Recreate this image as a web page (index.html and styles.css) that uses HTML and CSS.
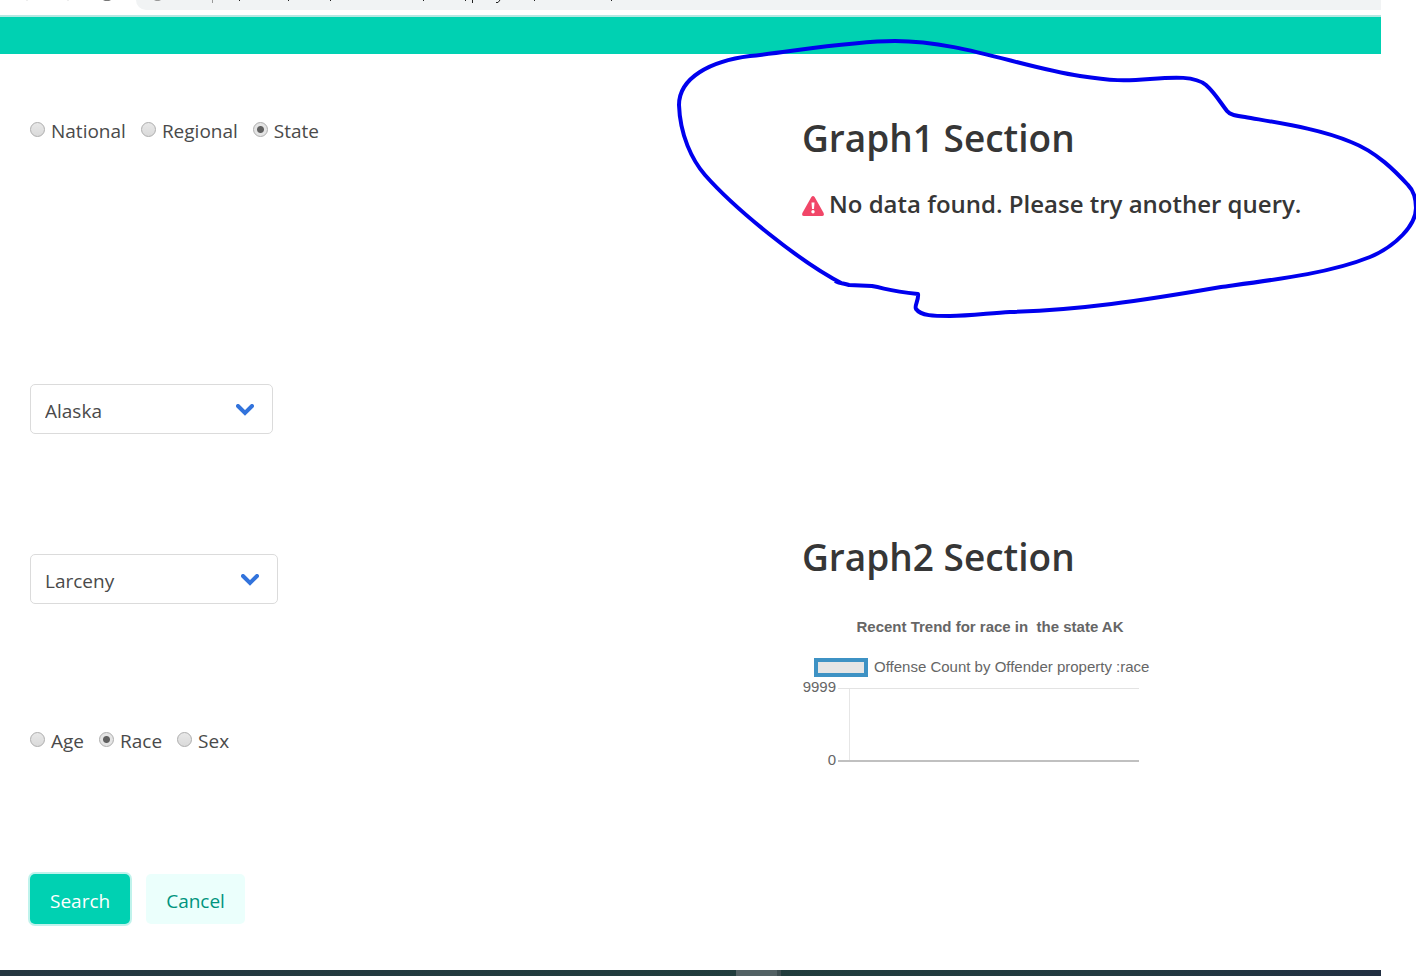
FILE: index.html
```html
<!DOCTYPE html>
<html lang="en">
<head>
<meta charset="utf-8">
<title>Crime data query</title>
<link rel="stylesheet" href="styles.css">
</head>
<body>
<div class="screen">
  <div class="browser-bar">
    <svg class="bar-icons" width="136" height="10" aria-hidden="true">
      <path d="M103 0h8l-2 1h-4z" fill="#777"/>
      <path d="M26 0h2M67 0h2" stroke="#ddd"/>
    </svg>
    <div class="address">
      <svg width="500" height="10" aria-hidden="true">
        <path d="M18 0h7l-2 1h-3z" fill="#999"/>
        <path d="M76.500 0v3" stroke="#999"/>
        <path d="M103.500 0v1M152.500 0v1M194.500 0v1M287.500 0v1M329.500 0v1M398.500 0v1M475.500 0v1" stroke="#222"/>
        <path d="M336.500 0v3M364 0l-2 2.500h-2" fill="none" stroke="#222"/>
      </svg>
    </div>
  </div>
  <header class="hero"></header>
  <main class="columns">
    <form class="query">
      <fieldset class="radios scope">
        <label class="radio"><input type="radio" name="scope">National</label>
        <label class="radio"><input type="radio" name="scope">Regional</label>
        <label class="radio"><input type="radio" name="scope" checked>State</label>
      </fieldset>
      <div class="select state">
        <select aria-label="State"><option>Alaska</option></select>
        <svg class="chevron" viewBox="0 0 18 12" aria-hidden="true"><path d="M2 2l7 7 7-7"/></svg>
      </div>
      <div class="select offense">
        <select aria-label="Offense"><option>Larceny</option></select>
        <svg class="chevron" viewBox="0 0 18 12" aria-hidden="true"><path d="M2 2l7 7 7-7"/></svg>
      </div>
      <fieldset class="radios property">
        <label class="radio"><input type="radio" name="property">Age</label>
        <label class="radio"><input type="radio" name="property" checked>Race</label>
        <label class="radio"><input type="radio" name="property">Sex</label>
      </fieldset>
      <div class="buttons">
        <button type="button" class="button primary">Search</button>
        <button type="button" class="button light">Cancel</button>
      </div>
    </form>
    <div class="graphs">
      <section class="graph">
        <h1>Graph1 Section</h1>
        <h2 class="notice">
          <svg width="22" height="20" viewBox="0 0 22 20" aria-hidden="true">
            <path d="M9.400 1Q11-1 12.600 1L21.600 17Q22.500 20 20 20H2Q-.5 20 .4 17z" fill="#f14668"/>
            <path d="M9.500 6.500h3l-.5 6.500h-2z" fill="#fff"/><circle cx="11" cy="15.800" r="1.700" fill="#fff"/>
          </svg>
          No data found. Please try another query.
        </h2>
      </section>
      <section>
        <h1>Graph2 Section</h1>
        <div class="chart">
          <div class="chart-title">Recent Trend for race in &nbsp;the state AK</div>
          <div class="legend"><span class="swatch"></span>Offense Count by Offender property :race</div>
          <div class="plot">
            <div class="ticks"><span>9999</span><span>0</span></div>
            <div class="area"></div>
          </div>
        </div>
      </section>
    </div>
  </main>
  <footer class="taskbar"><span class="task"></span></footer>
</div>
<svg class="annotation" width="1416" height="330" viewBox="0 0 1416 330" aria-hidden="true">
  <path d="M835 281C841 284 843 283 849 285L872 286C888 289 889 291 918 294C919 300 914 306 916 309C921 316 934 316 950 316C970 316 990 313 1010 312C1080 310 1140 301 1221 287C1280 279 1330 273 1370 257C1396 246 1416 225 1416 208C1416 198 1414 191 1408 185C1396 172 1377 152 1351 142C1320 129 1285 124 1245 117C1236 116 1230 115 1227 111C1220 102 1215 93 1206 85C1195 76 1175 77 1150 79C1125 81 1112 81 1080 76C1020 67 960 41 895 41C850 41 790 52 750 56C710 61 679 78 679 105C680 135 692 160 705 175C735 209 800 262 843 284"/>
</svg>
</body>
</html>
```
FILE: styles.css
```css
* { box-sizing: border-box; }
body {
  margin: 0;
  background: #fff;
  color: #4a4a4a;
  font: 19px/30px "Open Sans", "Noto Sans", sans-serif;
  position: relative;
  overflow-x: hidden;
}
.screen { margin-right: 35px; min-height: 100vh; display: flex; flex-direction: column; }
.browser-bar { display: flex; height: 15px; align-items: flex-start; }
.bar-icons { flex: none; }
.address { flex: 1; height: 10px; background: #f1f3f4; border-bottom-left-radius: 10px; overflow: hidden; }
.address svg { display: block; }
.hero { height: 39px; background: #00d1b2; border-top: 2px solid #b5e8e2; }
.columns { flex: 1; display: grid; grid-template-columns: 4fr 3fr; padding: 61px 0 46px 30px; }
.query { display: flex; flex-direction: column; align-items: flex-start; }
.radios { display: flex; gap: 15px; border: 0; margin: 0; padding: 0; }
.scope { margin: 1px 0 238px; }
.property { margin: 2px 0 118px; }
.radio { display: flex; align-items: center; gap: 6px; }
.radio input {
  appearance: none;
  width: 15px;
  height: 15px;
  margin: 0 0 4px;
  border: 1px solid #adadad;
  border-radius: 50%;
  background: linear-gradient(#e8e8e8, #dadada);
}
.radio input:checked { background: radial-gradient(circle, #606060 3px, #e4e4e4 4px); }
.select { position: relative; margin-bottom: 120px; }
.state { width: 243px; }
.offense { width: 248px; }
.select select {
  appearance: none;
  display: block;
  width: 100%;
  height: 50px;
  padding: 4px 50px 0 14px;
  border: 1px solid #dbdbdb;
  border-radius: 5px;
  background: #fff;
  color: inherit;
  font: inherit;
}
.chevron { position: absolute; right: 19px; top: 20px; width: 18px; height: 12px; fill: none; stroke: #3273dc; stroke-width: 4; stroke-linecap: round; pointer-events: none; }
.buttons { display: flex; gap: 16px; }
.button { height: 50px; padding: 4px 20px 0; border: 0; border-radius: 5px; font: inherit; }
.primary { background: #00d1b2; color: #fff; box-shadow: 0 0 0 2px rgba(0, 209, 178, 0.25); }
.light { background: #ebfffc; color: #00947e; }
.graph { min-height: 419px; }
h1 { margin: 0; color: #363636; font-size: 37px; line-height: 46px; font-weight: 600; }
.notice { display: flex; align-items: center; gap: 5px; margin: 25px 0 0; color: #363636; font-size: 24px; line-height: 36px; font-weight: 600; white-space: nowrap; }
.notice svg { flex: none; margin-top: 4px; }
.chart { width: 350px; margin-top: 37px; color: #666; font: 15px/20px "Liberation Sans", Arial, sans-serif; white-space: nowrap; }
.chart-title { padding-left: 26px; text-align: center; font-weight: bold; }
.legend { display: flex; align-items: center; gap: 6px; margin: 20px 0 0 12px; }
.swatch { width: 54px; height: 19px; border: 4px solid #3e92c4; background: #e5e5e5; }
.plot { display: flex; gap: 2px; }
.ticks { width: 34px; display: flex; flex-direction: column; justify-content: space-between; text-align: right; }
.area { width: 301px; height: 74px; margin: 11px 0 8px; border-top: 1px solid #e3e3e3; border-bottom: 2px solid #c0c0c0; background: linear-gradient(#e6e6e6, #e6e6e6) 11px 0 / 1px 100% no-repeat; }
.taskbar { height: 6px; padding-left: 736px; background: linear-gradient(90deg, #253741, #203d3d 55%, #223a40 80%, #212f42); }
.task { display: block; width: 45px; height: 6px; background: #526164; border-right: 4px solid #3d4d50; }
.annotation { position: absolute; top: 0; left: 0; pointer-events: none; fill: none; stroke: #00e; stroke-width: 4; stroke-linejoin: round; }
```
